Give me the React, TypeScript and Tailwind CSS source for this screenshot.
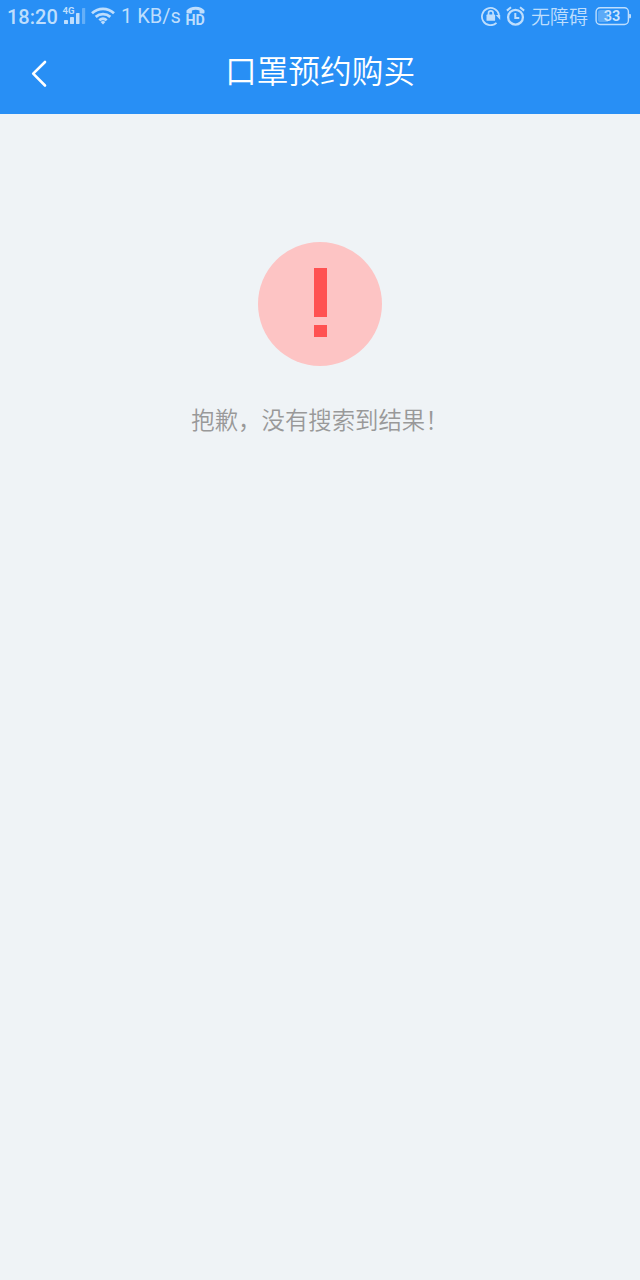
function SignalIcon() {
  return (
    <svg width="23" height="18" viewBox="0 0 23 18" fill="#bedefd" className="shrink-0 overflow-visible">
      <text x="-.5" y="7" fontSize="9" fontWeight="700" fontFamily="Roboto, sans-serif" textLength="12" lengthAdjust="spacingAndGlyphs">4G</text>
      <rect x="1" y="13" width="4" height="4" rx=".4" />
      <rect x="7" y="10" width="4" height="7" rx=".4" />
      <rect x="13" y="6" width="3.5" height="11" rx=".4" />
      <rect x="19" y="1" width="3.2" height="16" rx=".4" opacity=".4" />
    </svg>
  );
}

function WifiIcon() {
  return (
    <svg width="24" height="18" viewBox="0 0 24 18" fill="none" stroke="#bedefd" strokeWidth="2.8" className="shrink-0">
      <path d="M1 6.2C7.4.4 16.6.4 23 6.2" />
      <path d="M4.7 9.9c4.3-3.8 10.3-3.8 14.6 0" />
      <path d="M8.3 13.3c2.3-2 5.1-2 7.4 0" />
      <path d="M9.6 15c1.4-1.3 3.4-1.3 4.8 0L12 17.4Z" fill="#bedefd" stroke="none" />
    </svg>
  );
}

function HdCallIcon() {
  return (
    <svg width="20" height="22" viewBox="0 0 20 22" fill="#bedefd" className="shrink-0 overflow-visible">
      <path d="M.5 7.8V5.6C2.3 2.9 5.8 1.7 9.7 1.7s7.2 1.2 8.8 3.9v2.2c0 .5-.4.7-.8.7h-3.4c-.5 0-.8-.3-.8-.8V5.4c-2.6-.8-5-.8-7.6 0v2.3c0 .5-.3.8-.8.8H1.3c-.5 0-.8-.2-.8-.7Z" />
      <text x="-.5" y="20" fontSize="15.5" fontWeight="700" fontFamily="Roboto, sans-serif" textLength="19.3" lengthAdjust="spacingAndGlyphs">HD</text>
    </svg>
  );
}

function RotationLockIcon() {
  return (
    <svg width="20" height="20" viewBox="0 0 20 20" fill="none" stroke="#bedefd" className="shrink-0">
      <path d="M15.5 16.8A8.6 8.6 0 1 1 18 9" strokeWidth="1.8" />
      <path d="M14.8 9h4.4v5Z" fill="#bedefd" stroke="none" />
      <rect x="5.5" y="8.6" width="8.6" height="6.2" rx=".6" fill="#bedefd" stroke="none" />
      <path d="M7.5 9V7.2a2.3 2.3 0 0 1 4.6 0V9" strokeWidth="1.7" />
    </svg>
  );
}

function AlarmIcon() {
  return (
    <svg width="19" height="20" viewBox="0 0 19 20" fill="none" stroke="#bedefd" className="shrink-0">
      <circle cx="9.5" cy="11.2" r="7.4" strokeWidth="2.3" />
      <path d="M.9 4.6 5 1.3M18.1 4.6 14 1.3" strokeWidth="2" />
      <path d="M9.3 7v5h4" strokeWidth="2" />
    </svg>
  );
}

function BatteryIcon() {
  return (
    <svg width="37" height="20" viewBox="0 0 37 20" className="shrink-0">
      <rect x="1.1" y="1.7" width="32.3" height="16.8" rx="4" fill="none" stroke="#bedefd" strokeWidth="1.4" />
      <path d="M5.6 4H13v12H5.6A2.6 2.6 0 0 1 3 13.4V6.6A2.6 2.6 0 0 1 5.6 4Z" fill="#bedefd" opacity=".35" />
      <path d="M34.1 8h1c.6 0 .9.3.9.9v2.4c0 .6-.3.9-.9.9h-1Z" fill="#bedefd" />
      <text x="17" y="15.4" textAnchor="middle" fill="#cbe4fd" fontSize="14.5" fontWeight="600" fontFamily="Roboto, sans-serif">33</text>
    </svg>
  );
}

function StatusBar() {
  return (
    <div className="flex h-8 items-center justify-between pr-2 pl-[7px] text-[#bedefd]">
      <div className="flex items-center">
        <span className="mt-0.5 w-[50px] text-[20px] leading-8 font-medium whitespace-nowrap">18:20</span>
        <span className="ml-1.5"><SignalIcon /></span>
        <span className="ml-[5px]"><WifiIcon /></span>
        <span className="ml-1.5 w-[60px] text-[20px] leading-8 whitespace-nowrap">1 KB/s</span>
        <span className="ml-[5px]"><HdCallIcon /></span>
      </div>
      <div className="flex items-center">
        <RotationLockIcon />
        <span className="ml-[5px]"><AlarmIcon /></span>
        <span className="ml-1.5 font-['Noto_Sans_CJK_SC',sans-serif] text-[19px] leading-8 font-[350]">无障碍</span>
        <span className="ml-[7px]"><BatteryIcon /></span>
      </div>
    </div>
  );
}

export default function App() {
  return (
    <div className="min-h-screen bg-[#eff3f6] font-[Roboto,'Noto_Sans_CJK_SC',sans-serif]">
      <header className="h-[114px] bg-[#288ff5]">
        <StatusBar />
        <div className="grid h-[82px] grid-cols-[80px_1fr_80px] items-center">
          <button aria-label="返回" className="ml-[30px] w-5">
            <svg width="18" height="30" viewBox="0 0 18 30" fill="none" stroke="white" strokeWidth="2.6" strokeLinecap="round" strokeLinejoin="round">
              <path d="M15 4 3.2 15.7 15 27.5" />
            </svg>
          </button>
          <h1 className="mb-[9px] text-center font-['Noto_Sans_CJK_SC',sans-serif] text-[31.7px] leading-10 font-[350] text-white">口罩预约购买</h1>
        </div>
      </header>
      <main className="flex flex-col items-center pt-32">
        <div className="flex h-[124px] w-[124px] flex-col items-center gap-2 rounded-full bg-[#fdc4c4] pt-[26px] pl-px">
          <div className="h-[49px] w-[13px] bg-[#ff5252]" />
          <div className="h-3 w-[13px] bg-[#ff5252]" />
        </div>
        <p className="mt-[35px] font-['Noto_Sans_CJK_SC',sans-serif] text-[23.4px] leading-9 font-[350] text-[#999]">抱歉，没有搜索到结果！</p>
      </main>
    </div>
  );
}
